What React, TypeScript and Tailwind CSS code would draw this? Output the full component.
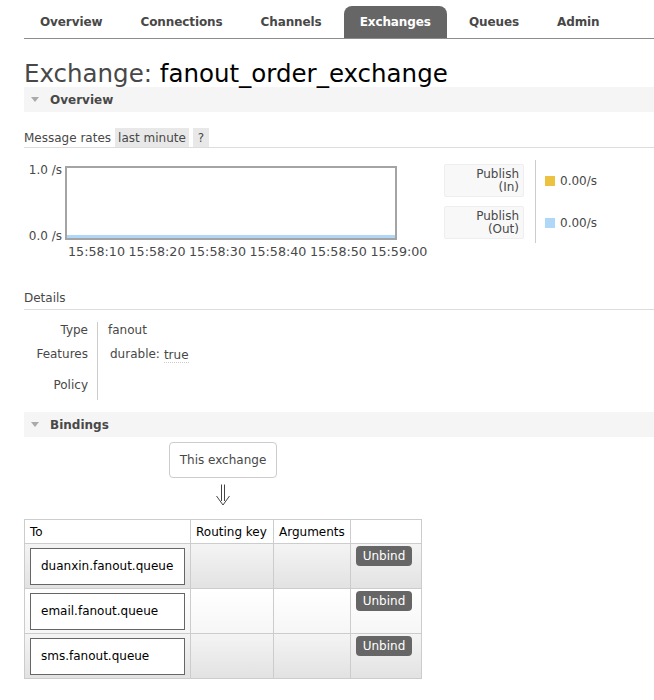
import React from 'react';

const tabs = ['Overview', 'Connections', 'Channels', 'Exchanges', 'Queues', 'Admin'];
const times = ['15:58:10', '15:58:20', '15:58:30', '15:58:40', '15:58:50', '15:59:00'];
const bindings = ['duanxin.fanout.queue', 'email.fanout.queue', 'sms.fanout.queue'];

const SectionBar: React.FC<{ title: string }> = ({ title }) => (
  <div className="h-[25px] bg-[#f5f5f5] flex items-center">
    <span className="ml-[7px] w-0 h-0 border-l-[4px] border-r-[4px] border-t-[5px] border-l-transparent border-r-transparent border-t-[#aaa]" />
    <span className="ml-[11px] font-bold text-[12px] text-[#484848]">{title}</span>
  </div>
);

const App: React.FC = () => {
  return (
    <div className="min-h-screen bg-white text-[12px] text-[#484848] overflow-hidden" style={{ fontFamily: '"DejaVu Sans", Verdana, sans-serif' }}>
      <div className="pl-[24px]">
        {/* nav */}
        <ul className="flex pt-[6px] border-b border-[#8c8c8c] w-[700px]">
          {tabs.map((t) => (
            <li
              key={t}
              className={
                t === 'Exchanges'
                  ? 'h-[32px] px-[16px] mr-[6px] flex items-center font-bold tracking-[-0.1px] text-white bg-[#666] rounded-t-[8px]'
                  : 'h-[32px] px-[16px] mr-[6px] flex items-center font-bold tracking-[-0.1px] text-[#484848]'
              }
            >
              {t}
            </li>
          ))}
        </ul>

        <h1 className="mt-[21px] text-[24.5px] leading-[27px] whitespace-nowrap">
          <span className="text-[#484848]">Exchange: </span>
          <span className="text-black">fanout_order_exchange</span>
        </h1>

        <SectionBar title="Overview" />

        {/* message rates */}
        <div className="mt-[16px] flex items-center h-[20px] border-b border-[#ddd]">
          <span>Message rates</span>
          <span className="ml-[4px] h-[19px] px-[3px] bg-[#e8e8e8] flex items-center">last minute</span>
          <span className="ml-[4px] h-[19px] px-[5px] bg-[#e8e8e8] flex items-center">?</span>
        </div>

        <div className="flex mt-[14px]">
          <div className="w-[400px] flex flex-col">
            <div className="flex">
              <div className="w-[41px] h-[78px] flex flex-col justify-between items-end pr-[3px] pt-[1px] text-[12px] leading-[14px]">
                <span>1.0 /s</span>
                <span className="mb-[-3px]">0.0 /s</span>
              </div>
              <div className="mt-[4px] w-[332px] h-[74px] border-2 border-[#a4a4a4] flex flex-col justify-end">
                <div className="h-[3px] bg-[#afd8f8]" />
              </div>
            </div>
            <div className="flex ml-[44px] mt-[5px] leading-[14px] text-[12.7px]">
              {times.map((t) => (
                <span key={t} className="mr-[3.5px] whitespace-nowrap">{t}</span>
              ))}
            </div>
          </div>

          <div className="ml-[20px] flex flex-col gap-[9px] pt-[2px]">
            {[['Publish', '(In)'], ['Publish', '(Out)']].map(([a, b]) => (
              <div key={b} className="w-[80px] h-[33px] bg-[#f8f8f8] border border-[#eee] rounded-[2px] flex flex-col items-end justify-center pr-[4px] leading-[13px]">
                <span>{a}</span>
                <span>{b}</span>
              </div>
            ))}
          </div>
          <div className="ml-[11px] w-px h-[83px] bg-[#ccc] mt-[-2px]" />
          <div className="ml-[9px] flex flex-col gap-[9px] pt-[2px]">
            {['#edc240', '#afd8f8'].map((c) => (
              <div key={c} className="h-[33px] flex items-center">
                <span className={c === '#edc240' ? 'w-[10px] h-[10px] bg-[#edc240]' : 'w-[10px] h-[10px] bg-[#afd8f8]'} />
                <span className="ml-[5px]">0.00/s</span>
              </div>
            ))}
          </div>
        </div>

        {/* details */}
        <div className="mt-[32px] h-[19px] border-b border-[#ddd] leading-[14px]">Details</div>
        <div className="flex mt-[12px]">
          <div className="w-[73px] flex flex-col items-end pr-[9px] pt-[1px] leading-[14px]">
            <span className="h-[24px]">Type</span>
            <span className="h-[31px]">Features</span>
            <span>Policy</span>
          </div>
          <div className="w-px h-[78px] bg-[#ccc]" />
          <div className="flex flex-col pl-[10px] pt-[1px] leading-[14px]">
            <span className="h-[24px]">fanout</span>
            <span className="ml-[2px] flex items-start">
              <span>durable:</span>
              <span className="ml-[4px] mt-[1px] border-b border-dotted border-[#ccc]">true</span>
            </span>
          </div>
        </div>

        <div className="mt-[12px]">
          <SectionBar title="Bindings" />
        </div>

        {/* bindings */}
        <div className="w-[398px] flex flex-col items-center">
          <div className="mt-[5px] w-[108px] h-[36px] border border-[#ccc] rounded-[4px] flex items-center justify-center">
            This exchange
          </div>
          <div className="h-[41px] pt-[6px]">
            <svg width="16" height="22" viewBox="0 0 16 22" fill="none" stroke="#444" strokeWidth="1">
              <path d="M6.5 0.5 V17" />
              <path d="M9.5 0.5 V17" />
              <path d="M1.5 12 L8 21 L14.5 12" />
            </svg>
          </div>
          <table className="w-[398px] border-collapse border border-[#ccc] text-black">
            <thead>
              <tr className="h-[24px] bg-white">
                <th className="w-[166px] border border-[#ccc] text-left font-normal pl-[5px]">To</th>
                <th className="w-[83px] border border-[#ccc] text-left font-normal pl-[5px]">Routing key</th>
                <th className="w-[77px] border border-[#ccc] text-left font-normal pl-[5px]">Arguments</th>
                <th className="border border-[#ccc]" />
              </tr>
            </thead>
            <tbody>
              {bindings.map((q, i) => (
                <tr
                  key={q}
                  className={
                    i % 2 === 0
                      ? 'h-[45px] bg-gradient-to-b from-[#f4f4f4] to-[#e2e2e2]'
                      : 'h-[45px] bg-gradient-to-b from-[#ffffff] to-[#f6f6f6]'
                  }
                >
                  <td className="border border-[#ccc] px-[5px] align-middle">
                    <div className="w-[155px] h-[37px] bg-white border border-[#666] flex items-center pl-[10px] whitespace-nowrap">
                      {q}
                    </div>
                  </td>
                  <td className="border border-[#ccc]" />
                  <td className="border border-[#ccc]" />
                  <td className="border border-[#ccc] align-top pt-[2px] pl-[5px]">
                    <button className="w-[56px] h-[20px] bg-[#666] text-white rounded-[4px] text-[12px] leading-[20px]">Unbind</button>
                  </td>
                </tr>
              ))}
            </tbody>
          </table>
        </div>
      </div>
    </div>
  );
};

export default App;
